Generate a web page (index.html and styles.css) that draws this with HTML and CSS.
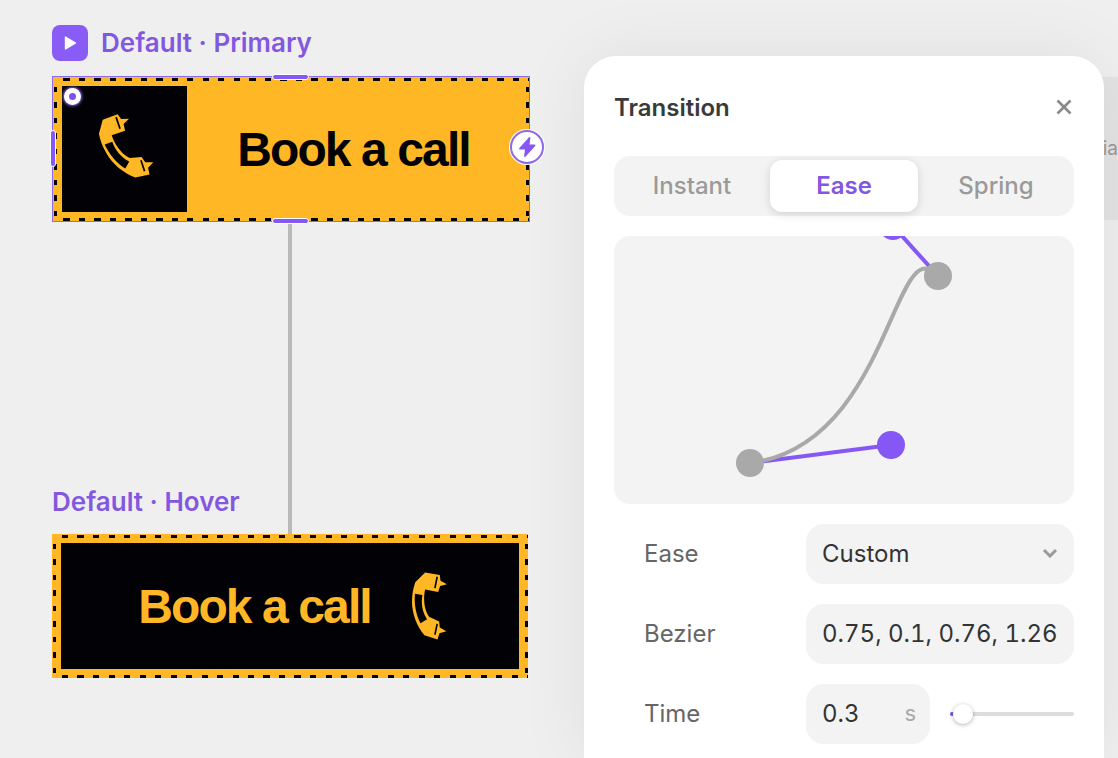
FILE: index.html
```html
<!DOCTYPE html>
<html lang="en">
<head>
  <meta charset="UTF-8">
  <title>Transition</title>
  <link rel="stylesheet" href="styles.css">
</head>
<body>
  <svg class="defs" width="0" height="0">
    <defs>
      <symbol id="phone" viewBox="0 0 107 205">
        <path fill="#ffb726" d="M40 0 85 8 87 25 107 36 86 41 80 60 40 52C35 75 35 110 52 135L83 150 85 168 105 180 84 186 78 205 38 192C15 165 0 125 0 90 0 70 3 50 10 30Z"/>
        <path fill="#020206" d="M9 65 32 69C27 95 32 122 46 143L26 155C12 130 6 95 9 65Z"/>
        <path stroke="#020206" stroke-width="5" fill="none" d="M77 13 70 48M77 157 70 190"/>
      </symbol>
    </defs>
  </svg>

  <div class="backcard"><span class="backcard-text">ia</span></div>

  <div class="frame-title primary-title">
    <span class="play-badge">
      <svg width="18" height="18" viewBox="0 0 18 18"><path d="M4.5 3 14.5 9 4.5 15Z" fill="#fff" stroke="#fff" stroke-width="1.4" stroke-linejoin="round"/></svg>
    </span>
    Default · Primary
  </div>

  <div class="connector"></div>

  <div class="node node-primary">
    <div class="icon-box">
      <svg class="phone phone-tilted" width="37" height="72"><use href="#phone"/></svg>
    </div>
    <div class="node-label">Book a call</div>

    <span class="handle handle-top"></span>
    <span class="handle handle-bottom"></span>
    <span class="handle handle-left"></span>
    <span class="radius-dot"></span>
    <span class="bolt">
      <svg width="24" height="24" viewBox="0 0 24 24"><path d="M14.500 3 5 13.500h6l-1 7.500 9.500-10.500h-6z" fill="#8557f5" stroke="#8557f5" stroke-width="1.8" stroke-linejoin="round"/></svg>
    </span>
  </div>

  <div class="frame-title hover-title">Default · Hover</div>

  <div class="node node-hover">
    <div class="hover-inner">
      <div class="node-label">Book a call</div>
      <svg class="phone" width="35" height="68"><use href="#phone"/></svg>
    </div>
  </div>

  <div class="panel">
    <div class="panel-head">
      <span class="panel-title">Transition</span>
      <svg width="16" height="16" viewBox="0 0 16 16"><path d="M1.500 1.500 14.500 14.500M14.500 1.500 1.500 14.500" stroke="#8a8a8a" stroke-width="2.600" fill="none"/></svg>
    </div>

    <div class="tabs">
      <div class="tab">Instant</div>
      <div class="tab tab-active">Ease</div>
      <div class="tab">Spring</div>
    </div>

    <div class="curve-box">
      <svg width="460" height="268" viewBox="0 0 460 268">
        <path d="M136 227 277 209" stroke="#8557f5" stroke-width="4" fill="none"/>
        <path d="M279 -10 324 40" stroke="#8557f5" stroke-width="4" fill="none"/>
        <circle cx="277" cy="209" r="14" fill="#8557f5"/>
        <circle cx="279" cy="-10" r="14" fill="#8557f5"/>
        <path d="M136 227C277 209 279 -10 324 40" stroke="#a9a9a9" stroke-width="4" fill="none"/>
        <circle cx="136" cy="227" r="14" fill="#a9a9a9"/>
        <circle cx="324" cy="40" r="14" fill="#a9a9a9"/>
      </svg>
    </div>

    <div class="row">
      <span class="row-label">Ease</span>
      <div class="field field-wide">
        <span>Custom</span>
        <svg width="16" height="10" viewBox="0 0 16 10"><path d="M2 2 8 8 14 2" stroke="#9a9a9a" stroke-width="3" fill="none"/></svg>
      </div>
    </div>
    <div class="row">
      <span class="row-label">Bezier</span>
      <div class="field field-wide">0.75, 0.1, 0.76, 1.26</div>
    </div>
    <div class="row">
      <span class="row-label">Time</span>
      <div class="field field-time">
        <span>0.3</span>
        <span class="unit">s</span>
      </div>
      <div class="slider">
        <span class="slider-fill"></span>
        <span class="slider-thumb"></span>
      </div>
    </div>
  </div>
</body>
</html>
```

FILE: styles.css
```css
* {
  box-sizing: border-box;
}

body {
  margin: 0;
  width: 1118px;
  height: 758px;
  overflow: hidden;
  position: relative;
  background: #efefef;
  font-family: Inter, "Liberation Sans", sans-serif;
}

.defs {
  position: absolute;
}

/* canvas items */
.backcard {
  position: absolute;
  left: 1000px;
  top: 77px;
  width: 118px;
  height: 143px;
  background: #e4e4e4;
  display: flex;
  align-items: center;
  justify-content: flex-end;
  overflow: hidden;
}

.backcard-text {
  font-size: 19px;
  color: #999;
}

.frame-title {
  position: absolute;
  left: 52px;
  height: 36px;
  display: flex;
  align-items: center;
  gap: 13px;
  font-size: 26px;
  font-weight: 600;
  color: #8358e0;
  white-space: nowrap;
}

.primary-title {
  top: 24px;
}

.hover-title {
  top: 483px;
}

.play-badge {
  width: 36px;
  height: 36px;
  margin-top: 2px;
  border-radius: 8px;
  background: #8a5cf6;
  display: flex;
  align-items: center;
  justify-content: center;
}

.connector {
  position: absolute;
  left: 288px;
  top: 222px;
  width: 4px;
  height: 312px;
  background: #b9b9b9;
}

.node {
  position: absolute;
  left: 52px;
  display: flex;
  background: #ffb726;
}

/* the dashed edge, 6.5 on and 9 off along the top, 5.5 on along the side */
.node::before {
  content: "";
  position: absolute;
  inset: 1.5px;
  background-image:
    repeating-linear-gradient(90deg, transparent 0 9px, #000 9px 15.5px),
    repeating-linear-gradient(90deg, transparent 0 9px, #000 9px 15.5px),
    repeating-linear-gradient(180deg, transparent 0 8.5px, #000 8.5px 14px, transparent 14px 15.5px),
    repeating-linear-gradient(180deg, transparent 0 8.5px, #000 8.5px 14px, transparent 14px 15.5px);
  background-size: 100% 3px, 100% 3px, 3px 100%, 3px 100%;
  background-position: top left, bottom left, top left, top right;
  background-repeat: no-repeat;
}

.node-primary {
  top: 76px;
  width: 478px;
  height: 146px;
  padding: 10px;
  outline: 1.5px solid #8f6ae8;
  outline-offset: -1.5px;
}

.node-hover {
  top: 534px;
  width: 476px;
  height: 144px;
  padding: 9px;
}

.node-hover::before {
  inset: 0.5px;
}

.icon-box {
  width: 125px;
  height: 126px;
  background: #020206;
  display: flex;
  align-items: center;
  justify-content: center;
}

.phone-tilted {
  transform: translateY(-1px) rotate(-30deg);
}

.node-label {
  font-family: "Liberation Sans", sans-serif;
  font-size: 48px;
  font-weight: 700;
  letter-spacing: -1.9px;
  white-space: nowrap;
}

.node-primary .node-label {
  flex: 1;
  display: flex;
  align-items: center;
  justify-content: center;
  color: #020206;
}

.hover-inner {
  flex: 1;
  background: #020206;
  color: #ffb726;
  display: flex;
  align-items: center;
  justify-content: center;
  gap: 41px;
  padding-left: 5px;
}

.handle {
  position: absolute;
  background: #8557f5;
  border: 1.5px solid #fff;
  border-radius: 4px;
}

.handle-top,
.handle-bottom {
  left: 220px;
  width: 37px;
  height: 6px;
}

.handle-top {
  top: -2px;
}

.handle-bottom {
  bottom: -2px;
}

.handle-left {
  left: -2px;
  top: 54px;
  width: 6px;
  height: 37px;
}

.radius-dot {
  position: absolute;
  left: 12px;
  top: 12px;
  width: 17px;
  height: 17px;
  border-radius: 50%;
  background: #fff;
  box-shadow: 0 0 3px 1px #8f6ae8;
  display: flex;
  align-items: center;
  justify-content: center;
}

.radius-dot::after {
  content: "";
  width: 7px;
  height: 7px;
  border-radius: 50%;
  background: #7d50ef;
}

.bolt {
  position: absolute;
  left: 458px;
  top: 54px;
  width: 34px;
  height: 34px;
  border-radius: 50%;
  background: #fff;
  border: 2px solid #8f6ae8;
  box-shadow: 0 0 0 1px #fff;
  display: flex;
  align-items: center;
  justify-content: center;
}

/* panel */
.panel {
  position: absolute;
  left: 584px;
  top: 56px;
  width: 520px;
  height: 702px;
  background: #fff;
  border-radius: 32px 32px 0 0;
  box-shadow: 0 0 70px rgba(0, 0, 0, 0.07);
  padding: 30px 30px 0;
  display: flex;
  flex-direction: column;
}

.panel-head {
  display: flex;
  align-items: center;
  justify-content: space-between;
  flex-shrink: 0;
  height: 42px;
  padding-right: 2px;
  margin-bottom: 28px;
}

.panel-title {
  font-size: 24px;
  font-weight: 600;
  color: #3a3a3a;
}

.tabs {
  display: grid;
  grid-template-columns: 156px 148px 156px;
  align-items: center;
  flex-shrink: 0;
  height: 60px;
  border-radius: 16px;
  background: #f3f3f3;
  margin-bottom: 20px;
}

.tab {
  height: 52px;
  padding-bottom: 2px;
  display: flex;
  align-items: center;
  justify-content: center;
  font-size: 24px;
  font-weight: 500;
  color: #9a9a9a;
}

.tab-active {
  background: #fff;
  border-radius: 12px;
  color: #8358e0;
  font-weight: 600;
  box-shadow: 0 2px 8px rgba(0, 0, 0, 0.14);
}

.curve-box {
  flex-shrink: 0;
  height: 268px;
  border-radius: 16px;
  background: #f3f3f3;
  overflow: hidden;
  margin-bottom: 20px;
}

.curve-box svg {
  display: block;
}

.row {
  display: flex;
  align-items: center;
  flex-shrink: 0;
  height: 60px;
}

.row + .row {
  margin-top: 20px;
}

.row-label {
  width: 192px;
  padding: 0 0 2px 30px;
  font-size: 24px;
  color: #666;
}

.field {
  height: 60px;
  border-radius: 18px;
  background: #f3f3f3;
  display: flex;
  align-items: center;
  justify-content: space-between;
  padding: 0 16px 2px;
  font-size: 24px;
  font-variant-numeric: tabular-nums;
  color: #333;
  white-space: nowrap;
}

.field-wide {
  width: 268px;
}

.field-time {
  width: 124px;
  padding-right: 14px;
}

.unit {
  font-size: 22px;
  color: #aaa;
}

.slider {
  position: relative;
  width: 124px;
  height: 4px;
  margin-left: 20px;
  background: #ddd;
  border-radius: 2px;
}

.slider-fill {
  position: absolute;
  left: 0;
  top: 0;
  width: 4px;
  height: 4px;
  border-radius: 2px;
  background: #7d50ef;
}

.slider-thumb {
  position: absolute;
  left: 3px;
  top: -8px;
  width: 20px;
  height: 20px;
  border-radius: 50%;
  background: #fff;
  box-shadow: 0 1px 4px rgba(0, 0, 0, 0.3);
}
```
